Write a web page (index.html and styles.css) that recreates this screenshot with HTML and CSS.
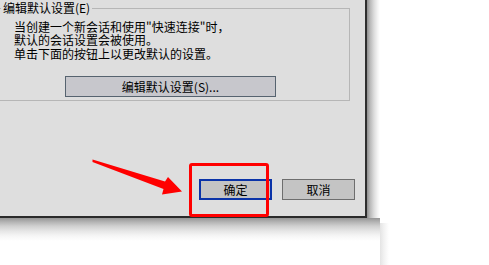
FILE: index.html
```html
<!DOCTYPE html>
<html lang="zh-CN">
<head>
<meta charset="utf-8">
<title>默认会话设置</title>
<link rel="stylesheet" href="styles.css">
</head>
<body>
<div class="screen">
  <div class="top-row">
    <div class="dialog">
      <fieldset class="group">
        <legend class="group-label">编辑默认设置(E)</legend>
        <div class="group-text">
          <p class="line">当创建一个新会话和使用"快速连接"时，</p>
          <p class="line">默认的会话设置会被使用。</p>
          <p class="line">单击下面的按钮上以更改默认的设置。</p>
        </div>
        <div class="edit-row">
          <button class="btn btn-edit" type="button">编辑默认设置(S)...</button>
        </div>
      </fieldset>
      <div class="actions">
        <button class="btn btn-ok" type="button">确定</button>
        <button class="btn btn-cancel" type="button">取消</button>
      </div>
    </div>
    <div class="shadow-right"></div>
  </div>
  <div class="bottom-row">
    <div class="shadow-bottom"></div>
    <div class="shadow-strip"></div>
  </div>

  <div class="highlight"></div>
  <svg class="arrow" width="489" height="265" viewBox="0 0 489 265" aria-hidden="true">
    <polygon points="92.5,159.6 165,181.5 168,177 182,191.5 162,194.5 163.5,189 92.5,162" fill="#ff0000"/>
  </svg>
</div>
</body>
</html>
```

FILE: styles.css
```css
html, body {
  margin: 0;
  padding: 0;
  background: #ffffff;
}

.screen {
  position: relative;
  width: 489px;
  height: 265px;
  overflow: hidden;
  background: #ffffff;
  font-family: "Noto Sans CJK SC", "Liberation Sans", sans-serif;
  font-size: 12px;
  color: #000000;
}

.top-row {
  display: flex;
  height: 218px;
}

.dialog {
  box-sizing: border-box;
  width: 367px;
  height: 218px;
  background: #dedede;
  border-right: 2px solid #2e2e2e;
  border-bottom: 2px solid #2a2a2a;
  display: flex;
  flex-direction: column;
}

.shadow-right {
  width: 13px;
  height: 218px;
  background: linear-gradient(to right, #8e8e8e 0px, #b8b8b8 3px, #dcdcdc 7px, #f6f6f6 11px, #ffffff 13px);
}

.bottom-row {
  display: flex;
  height: 47px;
}

.shadow-bottom {
  width: 380px;
  height: 47px;
  background: linear-gradient(to bottom, #959595 0px, #b4b4b4 4px, #cfcfcf 8px, #e6e6e6 13px, #f6f6f6 18px, #ffffff 23px);
}

.shadow-strip {
  width: 9px;
  height: 42px;
  margin-top: 5px;
  background: linear-gradient(to right, #e4e4e4 0px, #f2f2f2 4px, #ffffff 9px);
}

.group {
  box-sizing: border-box;
  width: 355px;
  height: 100px;
  margin: 1px 0 0 -5px;
  padding: 0 0 0 5px;
  border: 1px solid #b6b6b6;
  min-inline-size: 0;
}

.group-label {
  padding: 0 2px 0 2px;
  margin: 0;
  line-height: 14px;
  font-size: 12px;
}

.group-text {
  margin: 4.5px 0 0 13px;
  display: flex;
  flex-direction: column;
  gap: 0;
}

.line {
  margin: 0;
  height: 13.5px;
  line-height: 13.5px;
  white-space: nowrap;
}

.edit-row {
  display: flex;
  margin: 15.5px 0 0 64px;
}

.btn {
  box-sizing: border-box;
  font-family: "Noto Sans CJK SC", "Liberation Sans", sans-serif;
  font-size: 12px;
  color: #000000;
  padding: 0;
  margin: 0;
  line-height: 17px;
  text-align: center;
  border-radius: 0;
}

.btn-edit {
  width: 211px;
  height: 21px;
  background: #c7c7cc;
  border: 1.5px solid #56636f;
}

.actions {
  display: flex;
  justify-content: flex-end;
  gap: 10px;
  margin-top: 78px;
  padding-right: 10px;
}

.btn-ok {
  width: 73px;
  height: 21px;
  background: #c4c4c4;
  border: 2px solid #0a33a8;
}

.btn-cancel {
  width: 73px;
  height: 21px;
  background: #c4c4c4;
  border: 1.5px solid #6e6e6e;
}

.highlight {
  position: absolute;
  left: 189px;
  top: 163px;
  width: 80px;
  height: 54px;
  box-sizing: border-box;
  border: 3px solid #ff0000;
  border-radius: 3px;
}

.arrow {
  position: absolute;
  left: 0;
  top: 0;
}
```
